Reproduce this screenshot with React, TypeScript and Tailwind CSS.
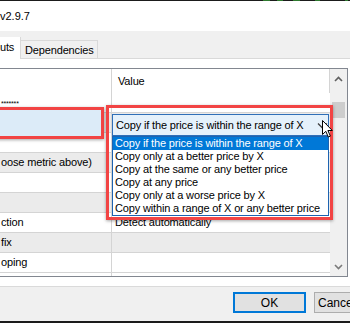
import React from "react";

type Row = { left: string; right: string; gray: boolean };

const rows: Row[] = [
  { left: "", right: "", gray: false },
  { left: "", right: "", gray: true },
  { left: "", right: "", gray: false },
  { left: "oose metric above)", right: "", gray: true },
  { left: "", right: "", gray: false },
  { left: "", right: "", gray: true },
  { left: "ction", right: "Detect automatically", gray: false },
  { left: "fix", right: "", gray: true },
  { left: "oping", right: "", gray: false },
];

const options = [
  "Copy if the price is within the range of X",
  "Copy only at a better price by X",
  "Copy at the same or any better price",
  "Copy at any price",
  "Copy only at a worse price by X",
  "Copy within a range of X or any better price",
];

function Chevron({ up, color }: { up?: boolean; color: string }) {
  return (
    <svg width="9" height="6" viewBox="0 0 9 6">
      <polyline
        points={up ? "1,5 4.5,1.5 8,5" : "1,1 4.5,4.5 8,1"}
        fill="none"
        stroke={color}
        strokeWidth="1.6"
      />
    </svg>
  );
}

function GridRow({ row, index }: { row: Row; index: number }) {
  return (
    <div
      className={`flex h-[20px] border-b border-[#d4d4d4] leading-[19px] ${
        row.gray ? "bg-[#ebebeb]" : "bg-white"
      }`}
    >
      <div className="w-[112px] shrink-0 border-r border-[#d4d4d4] pl-[1px] whitespace-nowrap overflow-hidden">
        {index === 0 ? <span className="text-[7px] tracking-[-0.2px]">*******</span> : row.left}
      </div>
      <div className="flex-1 pl-[3px] whitespace-nowrap overflow-hidden">{row.right}</div>
    </div>
  );
}

export default function App() {
  return (
    <div className="relative w-[350px] h-[323px] overflow-hidden bg-[#f0f0f0] text-black font-['Liberation_Sans',Arial,sans-serif] text-[11px] tracking-[-0.15px]">
      {/* top strip */}
      <div className="flex h-px bg-[#1b1b1b]">
        <span className="ml-[263px] w-[7px] bg-[#2f7a2f]" />
        <span className="ml-[7px] w-[6px] bg-[#2f7a2f]" />
        <span className="ml-[10px] w-[7px] bg-[#2f7a2f]" />
        <span className="ml-[15px] w-[5px] bg-[#2f7a2f]" />
        <span className="ml-[25px] w-[3px] bg-[#2f7a2f]" />
      </div>

      {/* title */}
      <div className="h-[30px] bg-white leading-[30px] tracking-normal">v2.9.7</div>

      {/* tabs */}
      <div className="flex h-[28px] items-end">
        <div className="w-[21px] h-[22px] bg-white border-r border-[#d9d9d9] leading-[21px] overflow-hidden whitespace-nowrap">
          uts
        </div>
        <div className="w-[77px] h-[19px] bg-[#f0f0f0] border-t border-r border-b border-[#d9d9d9] pl-[4px] leading-[18px]">
          Dependencies
        </div>
        <div className="flex-1 h-px bg-[#d9d9d9]" />
      </div>

      {/* tab page */}
      <div className="bg-white pt-[9px] border-b border-[#dadada]">
        <div className="w-[348px] h-[209px] border-t border-r border-b border-[#828790] flex">
          <div className="w-[330px] shrink-0 overflow-hidden">
            <div className="flex h-[24px] leading-[24px] border-r border-[#d4d4d4]">
              <div className="w-[112px] shrink-0 border-r border-[#d4d4d4]" />
              <div className="pl-[6px]">Value</div>
            </div>
            {rows.map((row, i) => (
              <GridRow key={i} row={row} index={i} />
            ))}
            <div className="h-[3px] bg-white flex">
              <div className="w-[112px] border-r border-[#d4d4d4]" />
            </div>
          </div>
          <div className="w-[17px] bg-[#f0f0f0] flex flex-col items-center">
            <div className="h-[17px] flex items-center justify-center pt-[3px]">
              <Chevron up color="#606060" />
            </div>
            <div className="mt-[16px] w-[13px] h-[16px] bg-[#cdcdcd]" />
            <div className="flex-1" />
            <div className="h-[17px] flex items-center justify-center pb-[1px]">
              <Chevron color="#7a7a7a" />
            </div>
          </div>
        </div>
        <div className="h-[9px]" />
      </div>

      {/* footer */}
      <div className="h-[34px] pt-[5px] flex gap-[8px] pl-[233px] whitespace-nowrap">
        <div className="w-[73px] h-[21px] shrink-0 border-2 border-[#0078d7] bg-[#e1e1e1] flex items-center justify-center text-[12px] tracking-normal">
          OK
        </div>
        <div className="w-[73px] h-[21px] shrink-0 border border-[#adadad] bg-[#e1e1e1] flex items-center pl-[3px] text-[12px] tracking-normal">
          Cancel
        </div>
      </div>
      <div className="h-[2px] bg-[#1b1b1b]" />

      {/* annotation: selected row */}
      <div className="absolute left-[-4px] top-[107px] w-[108px] h-[32px] border-[3px] border-[#f24444] bg-[#dcebf8] shadow-[0_1px_3px_rgba(0,0,0,0.35)]" />

      {/* annotation: dropdown */}
      <div className="absolute left-[106px] top-[105px] w-[227px] h-[115px] border-[3px] border-[#f24444] pt-[6px] pl-[3px] shadow-[0_1px_3px_rgba(0,0,0,0.35)]">
        <div className="w-[217px] h-[22px] border border-[#2f6fb8] bg-[#e5f1fb] flex items-center pl-[3px] whitespace-nowrap">
          <span className="flex-1">Copy if the price is within the range of X</span>
          <span className="pt-[1px]">
            <svg width="11" height="6" viewBox="0 0 11 6">
              <polyline points="1,0.5 5.5,5 10,0.5" fill="none" stroke="#404040" strokeWidth="1.3" />
            </svg>
          </span>
        </div>
        <div className="w-[217px] h-[80px] border border-[#1d63b0] bg-white whitespace-nowrap">
          {options.map((o, i) => (
            <div
              key={o}
              className={`h-[13px] leading-[13px] pl-[2px] ${
                i === 0 ? "bg-[#0078d7] text-white" : "text-black"
              }`}
            >
              {o}
            </div>
          ))}
        </div>
      </div>

      {/* mouse cursor */}
      <svg className="absolute left-[322px] top-[120px]" width="11" height="18" viewBox="0 0 11 18">
        <path
          d="M0.5 0.5 L0.5 14.5 L3.8 11.3 L6.3 17 L8.4 16.1 L5.9 10.5 L10.3 10.5 Z"
          fill="#ffffff"
          stroke="#000000"
          strokeWidth="1"
          strokeLinejoin="miter"
        />
      </svg>
    </div>
  );
}
